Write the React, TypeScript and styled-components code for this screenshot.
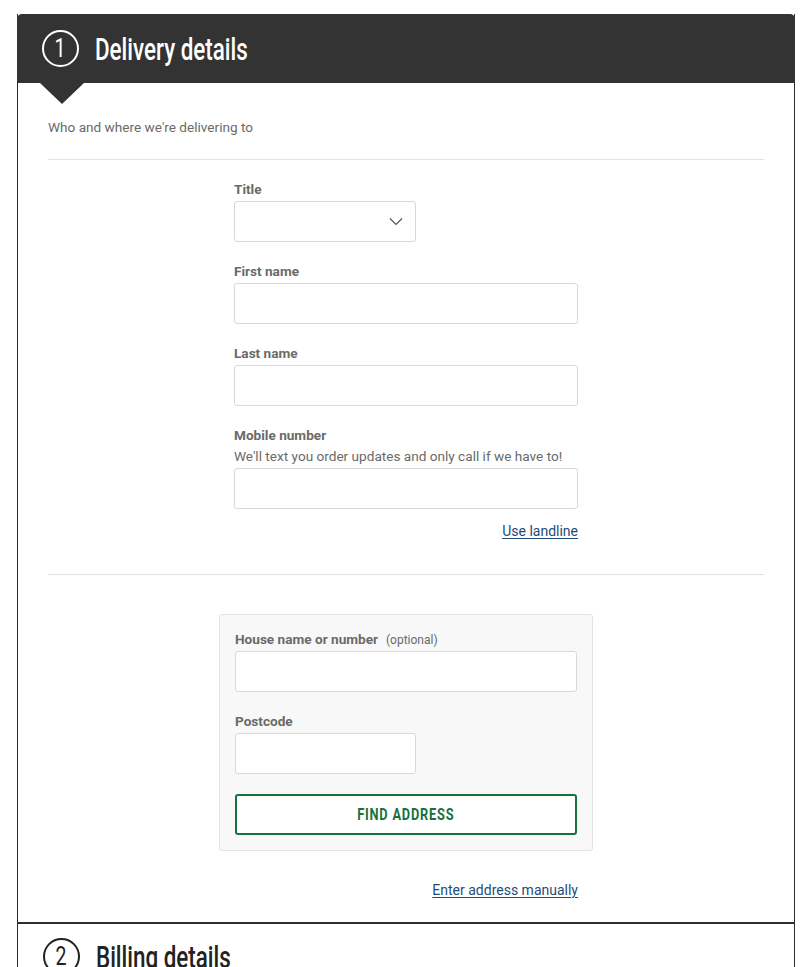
import React from "react";
import styled, { createGlobalStyle } from "styled-components";

const Global = createGlobalStyle`
  html, body { margin: 0; padding: 0; background: #fff; }
  body { font-family: Roboto, "Liberation Sans", Arial, sans-serif; color: #666; }
  * { box-sizing: border-box; }
`;

const Page = styled.div`
  padding: 14px 17px 0 17px;
`;

const Card = styled.section`
  border-left: 1px solid #2e2e2e;
  border-right: 1px solid #2e2e2e;
`;

const StepHeader = styled.header<{ $active?: boolean }>`
  position: relative;
  display: flex;
  align-items: center;
  gap: 16px;
  height: ${(p) => (p.$active ? "69px" : "66px")};
  padding-left: 25px;
  background: ${(p) => (p.$active ? "#333" : "#fff")};
  color: ${(p) => (p.$active ? "#fff" : "#222")};
  border-radius: ${(p) => (p.$active ? "5px 5px 0 0" : "0")};
  margin: ${(p) => (p.$active ? "0 -1px" : "0")};
  border-top: ${(p) => (p.$active ? "none" : "1px solid #2e2e2e")};

  &::after {
    content: "";
    display: ${(p) => (p.$active ? "block" : "none")};
    position: absolute;
    left: 23px;
    top: 100%;
    border-left: 22px solid transparent;
    border-right: 22px solid transparent;
    border-top: 21px solid #333;
  }
`;

const StepNumber = styled.span`
  flex: none;
  width: 37px;
  height: 37px;
  border: 2px solid currentColor;
  border-radius: 50%;
  display: flex;
  align-items: center;
  justify-content: center;
  font-size: 25px;
  line-height: 1;
  font-weight: 400;
`;

const NumberGlyph = styled.span`
  display: inline-block;
  transform: scaleX(0.78);
`;

const StepTitle = styled.h2`
  margin: 0;
  font-size: 32px;
  font-weight: 500;
  line-height: 1;
  display: inline-block;
  transform: scaleX(0.7);
  transform-origin: left center;
  white-space: nowrap;
`;

const Body = styled.div`
  padding: 34px 30px 23px;
  border-bottom: 1px solid #2e2e2e;
`;

const Intro = styled.p`
  margin: 0;
  font-size: 13.6px;
  line-height: 20px;
  color: #6a6a6a;
`;

const Divider = styled.hr<{ $top: number }>`
  border: none;
  border-top: 1px solid #e3e3e3;
  margin: ${(p) => p.$top}px 0 0;
`;

const Column = styled.div<{ $top: number }>`
  width: 344px;
  margin: ${(p) => p.$top}px auto 0;
  display: flex;
  flex-direction: column;
  gap: 20px;
`;

const Field = styled.div`
  display: flex;
  flex-direction: column;
`;

const Label = styled.label`
  display: block;
  height: 18px;
  font-size: 13.6px;
  line-height: 18px;
  font-weight: 700;
  color: #6a6a6a;
  margin-bottom: 3px;
`;

const Optional = styled.span`
  font-weight: 400;
  font-size: 12px;
  line-height: 1;
  margin-left: 8px;
`;

const Hint = styled.span`
  font-size: 13.6px;
  line-height: 18px;
  color: #6a6a6a;
  margin-bottom: 3px;
`;

const Input = styled.input<{ $w?: number }>`
  width: ${(p) => (p.$w ? `${p.$w}px` : "100%")};
  height: 41px;
  border: 1px solid #d8d8d8;
  border-radius: 3px;
  background: #fff;
  font: inherit;
  padding: 0 10px;
  outline: none;
`;

const SelectBox = styled.div`
  position: relative;
  width: 182px;
  height: 41px;
  border: 1px solid #d8d8d8;
  border-radius: 3px;
  background: #fff;
  display: flex;
  align-items: center;
  justify-content: flex-end;
  padding-right: 12px;
`;

const LinkRow = styled.div<{ $top: number }>`
  display: flex;
  justify-content: flex-end;
  margin-top: ${(p) => p.$top}px;
`;

const TextLink = styled.a`
  font-size: 14px;
  line-height: 18px;
  color: #1f4d78;
  text-decoration: underline;
  text-underline-offset: 2px;
  cursor: pointer;
`;

const AddressBox = styled.div`
  width: 374px;
  margin: 39px auto 0;
  padding: 15px;
  background: #f8f8f8;
  border: 1px solid #e4e4e4;
  border-radius: 3px;
  display: flex;
  flex-direction: column;
  gap: 20px;
`;

const FindButton = styled.button`
  width: 100%;
  height: 41px;
  border: 2px solid #17713f;
  border-radius: 3px;
  background: #fff;
  color: #17713f;
  font-family: Roboto, "Liberation Sans", Arial, sans-serif;
  font-size: 16px;
  font-weight: 700;
  letter-spacing: 1px;
  cursor: pointer;
`;

const ButtonText = styled.span`
  display: inline-block;
  transform: scaleX(0.8);
`;

const Chevron = () => (
  <svg width="14" height="9" viewBox="0 0 14 9" fill="none">
    <path d="M1 1.5 7 7.5 13 1.5" stroke="#555" strokeWidth="1.2" />
  </svg>
);

export default function App() {
  return (
    <>
      <Global />
      <Page>
        <Card>
          <StepHeader $active>
            <StepNumber>
              <NumberGlyph>1</NumberGlyph>
            </StepNumber>
            <StepTitle>Delivery details</StepTitle>
          </StepHeader>
          <Body>
            <Intro>Who and where we're delivering to</Intro>
            <Divider $top={22} />
            <Column $top={20}>
              <Field>
                <Label>Title</Label>
                <SelectBox>
                  <Chevron />
                </SelectBox>
              </Field>
              <Field>
                <Label>First name</Label>
                <Input />
              </Field>
              <Field>
                <Label>Last name</Label>
                <Input />
              </Field>
              <Field>
                <Label>Mobile number</Label>
                <Hint>We'll text you order updates and only call if we have to!</Hint>
                <Input type="tel" />
                <LinkRow $top={13}>
                  <TextLink>Use landline</TextLink>
                </LinkRow>
              </Field>
            </Column>
            <Divider $top={34} />
            <AddressBox>
              <Field>
                <Label>
                  House name or number<Optional>(optional)</Optional>
                </Label>
                <Input />
              </Field>
              <Field>
                <Label>Postcode</Label>
                <Input $w={181} />
              </Field>
              <FindButton>
                <ButtonText>FIND ADDRESS</ButtonText>
              </FindButton>
            </AddressBox>
            <Column $top={30}>
              <LinkRow $top={0}>
                <TextLink>Enter address manually</TextLink>
              </LinkRow>
            </Column>
          </Body>
        </Card>
        <Card>
          <StepHeader>
            <StepNumber>
              <NumberGlyph>2</NumberGlyph>
            </StepNumber>
            <StepTitle>Billing details</StepTitle>
          </StepHeader>
        </Card>
      </Page>
    </>
  );
}
